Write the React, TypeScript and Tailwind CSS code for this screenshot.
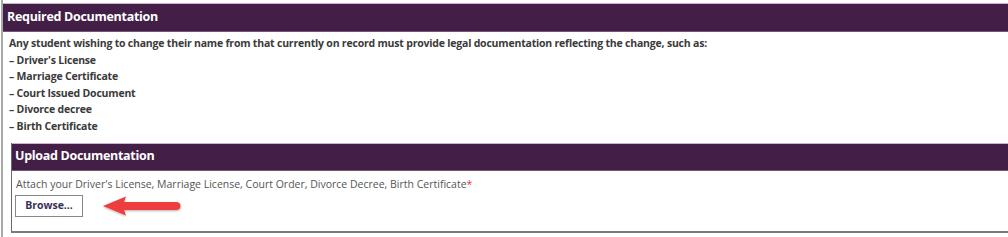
import React from "react";

const font = { fontFamily: '"Open Sans", "Noto Sans", Arial, sans-serif' };

export default function App() {
  return (
    <div className="w-[1008px] h-[237px] bg-white overflow-hidden" style={font}>
      <div className="ml-px border-l-2 border-[#a8a8a8] h-full pt-[3px]">
        <div className="h-[29px] bg-[#431f47] border-t border-[#c9b3cc] border-b border-b-[#6f5873] flex items-center pl-[4px]">
          <span className="text-white font-bold text-[12.5px] tracking-[-0.3px]">Required Documentation</span>
        </div>
        <div className="pl-[6px] pt-[3px] text-[10.5px] font-bold text-[#3a3a3a] leading-[16.6px] tracking-[-0.2px]">
          <div>Any student wishing to change their name from that currently on record must provide legal documentation reflecting the change, such as:</div>
          <div>– Driver's License</div>
          <div>– Marriage Certificate</div>
          <div>– Court Issued Document</div>
          <div>– Divorce decree</div>
          <div>– Birth Certificate</div>
        </div>
        <div className="ml-[8px] mt-[8px] border-l border-[#6a6a6a] border-b-2 border-b-[#7a7a7a] h-[90px]">
          <div className="h-[28px] bg-[#431f47] border-t border-[#c9b3cc] border-b border-b-[#6f5873] flex items-center pl-[3px]">
            <span className="text-white font-bold text-[12.5px] tracking-[-0.3px]">Upload Documentation</span>
          </div>
          <div className="pl-[4px] pt-[5px] text-[10.5px] text-[#555] leading-[16px]">
            Attach your Driver's License, Marriage License, Court Order, Divorce Decree, Birth Certificate<span className="text-[#e0403a]">*</span>
          </div>
          <div className="flex items-center mt-[3px] pl-[3px]">
            <div className="w-[68px] h-[22px] border border-[#888] flex items-center justify-center text-[10.5px] font-bold text-[#3a2f55]">
              Browse...
            </div>
            <div className="relative ml-[19px] h-[22px] w-[82px]">
              <svg width="82" height="22" viewBox="0 0 82 22" className="absolute left-0 top-0">
                <defs>
                  <filter id="sh" x="-20%" y="-50%" width="140%" height="200%">
                    <feDropShadow dx="0" dy="1" stdDeviation="1.2" floodColor="#000" floodOpacity="0.3" />
                  </filter>
                </defs>
                <g filter="url(#sh)">
                  <path d="M1 11 L24 1.5 L22 7 L74 7 Q78.5 7 78.5 11 Q78.5 15 74 15 L22 15 L24 20.5 Z" fill="#ee3c3c" />
                </g>
              </svg>
            </div>
          </div>
        </div>
      </div>
    </div>
  );
}
